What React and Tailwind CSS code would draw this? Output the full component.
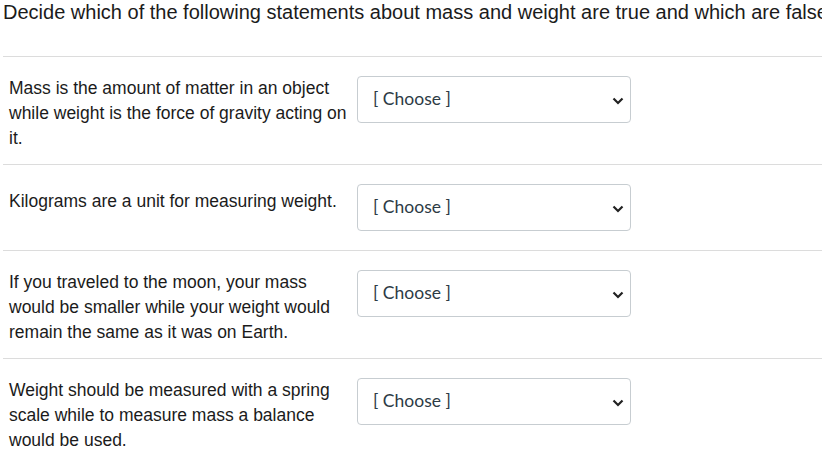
import React from 'react';

const ITEMS = [
  {
    text: 'Mass is the amount of matter in an object while weight is the force of gravity acting on it.',
    offset: '',
  },
  { text: 'Kilograms are a unit for measuring weight.', offset: 'pt-[5px]' },
  {
    text: 'If you traveled to the moon, your mass would be smaller while your weight would remain the same as it was on Earth.',
    offset: '',
  },
  {
    text: 'Weight should be measured with a spring scale while to measure mass a balance would be used.',
    offset: '',
  },
];

function ChooseBox() {
  return (
    <div className="w-[274px] h-[47px] shrink-0 mb-[6px] flex items-center justify-between pl-[15px] pr-[6px] pb-[1px] border border-[#c7cdd1] rounded-[4px] bg-white">
      <span className="text-[17.5px] text-[#2d3b45] font-['Lato',sans-serif]">[ Choose ]</span>
      <svg width="12" height="8" viewBox="0 0 12 8" className="mt-[3px]">
        <path d="M1.5 1.5 L6 6 L10.5 1.5" fill="none" stroke="#222" strokeWidth="2.2" />
      </svg>
    </div>
  );
}

export default function App() {
  return (
    <div className="w-[822px] h-[450px] overflow-hidden bg-white font-['Liberation_Sans',Arial,sans-serif] text-[#1b1b1b]">
      <div className="pl-[3px] w-[860px]">
        <h1 className="text-[20px] leading-[24px] whitespace-nowrap">
          Decide which of the following statements about mass and weight are true and which are false
        </h1>
        <div className="mt-[32px] border-t border-[#dcdcdc]" />
        {ITEMS.map((item, i) => (
          <div key={i} className="flex items-start gap-[6px] pl-[6px] pt-[19px] pb-[13px] border-b border-[#dcdcdc]">
            <p className={`w-[342px] text-[17.5px] leading-[25px] ${item.offset}`}>{item.text}</p>
            <ChooseBox />
          </div>
        ))}
      </div>
    </div>
  );
}
